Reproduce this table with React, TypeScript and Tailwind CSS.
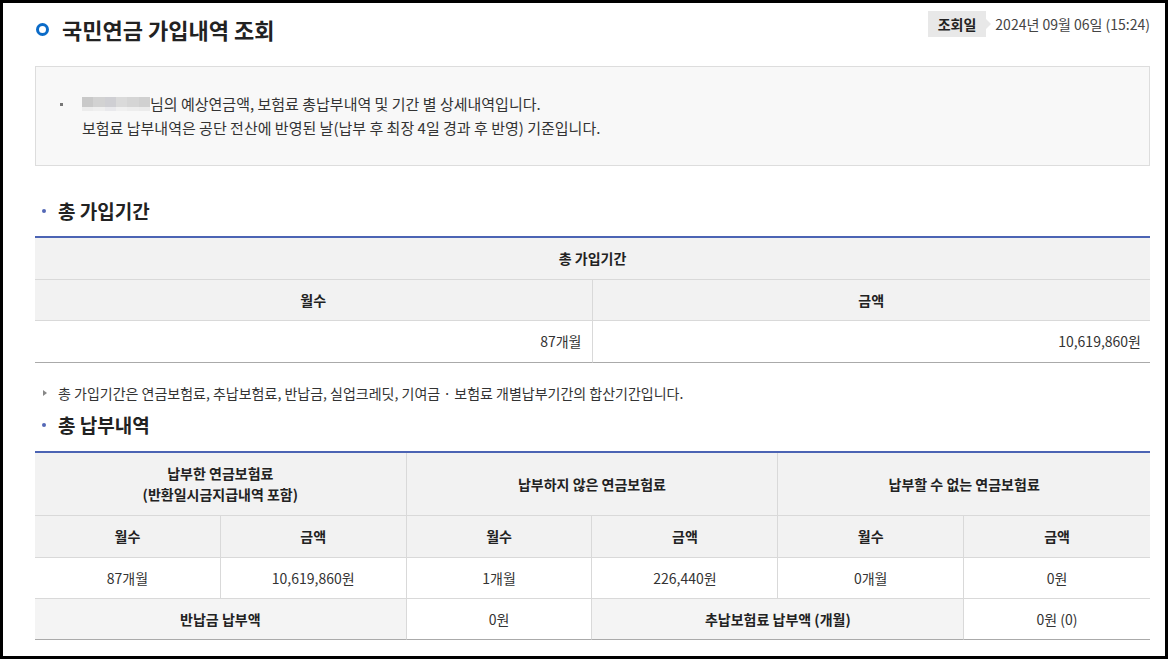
import React from "react";

const th = "flex items-center justify-center bg-[#f2f2f2] font-bold text-[14px] text-[#222] border-b border-[#d9d9d9]";
const td = "flex items-center justify-center text-[14px] text-[#333] border-b border-[#d9d9d9]";

function Heading({ children }: { children: React.ReactNode }) {
  return (
    <div className="flex items-center h-[26px]">
      <span className="ml-[7px] w-[4px] h-[4px] rounded-full bg-[#5468b6]" />
      <span className="ml-[12px] text-[19px] font-bold text-[#222] leading-[26px]">{children}</span>
    </div>
  );
}

function Blur() {
  const top = ["#c9c9c9", "#d2d2d2", "#cfcfd3", "#dadada", "#d5d5d5", "#d0d0d0"];
  const bot = ["#ececec", "#efefef", "#e9e9ec", "#f0f0f0", "#ededed", "#ebebeb"];
  return (
    <span className="inline-flex flex-col w-[68px] h-[14px] align-middle">
      <span className="flex h-[10px]">
        {top.map((c, i) => (
          <span key={i} className="flex-1" style={{ background: c }} />
        ))}
      </span>
      <span className="flex h-[4px]">
        {bot.map((c, i) => (
          <span key={i} className="flex-1" style={{ background: c }} />
        ))}
      </span>
    </span>
  );
}

export default function App() {
  return (
    <div className="w-[1168px] h-[659px] bg-black p-[3px] font-['Noto_Sans_CJK_KR','Noto_Sans',sans-serif]">
      <div className="w-full h-full bg-white pl-[32px] pr-[15px] overflow-hidden">
        {/* header */}
        <div className="flex justify-between items-start pt-[8px]">
          <div className="flex items-center mt-[3px] h-[30px]">
            <span className="ml-[1px] w-[13px] h-[13px] rounded-full border-[3px] border-[#0b6bc8]" />
            <span className="ml-[13px] text-[22px] font-bold text-[#222] leading-[30px]">국민연금 가입내역 조회</span>
          </div>
          <div className="flex items-center h-[26px]">
            <span className="h-[26px] px-[10px] flex items-center bg-[#e8e8e8] text-[14px] font-bold text-[#222]">조회일</span>
            <span className="w-0 h-0 border-y-[5px] border-y-transparent border-l-[5px] border-l-[#e8e8e8]" />
            <span className="ml-[4px] text-[14px] text-[#444]">2024년 09월 06일 (15:24)</span>
          </div>
        </div>

        {/* info box */}
        <div className="mt-[22px] border border-[#dddddd] bg-[#f8f8f8] pt-[25px] pb-[25px] pl-[24px]">
          <div className="flex items-start text-[15px] text-[#333] leading-[24px]">
            <span className="mt-[11px] w-[3px] h-[3px] bg-[#777]" />
            <div className="ml-[19px]">
              <div className="flex items-center">
                <Blur />
                <span>님의 예상연금액, 보험료 총납부내역 및 기간 별 상세내역입니다.</span>
              </div>
              <div>보험료 납부내역은 공단 전산에 반영된 날(납부 후 최장 4일 경과 후 반영) 기준입니다.</div>
            </div>
          </div>
        </div>

        {/* section 1 */}
        <div className="mt-[32px]">
          <Heading>총 가입기간</Heading>
        </div>
        <div className="mt-[12px] border-t-2 border-[#4c64b4]">
          <div className="grid grid-cols-2">
            <div className={`${th} col-span-2 h-[42px]`}>총 가입기간</div>
            <div className={`${th} h-[41px] border-r`}>월수</div>
            <div className={`${th} h-[41px]`}>금액</div>
            <div className={`${td} h-[42px] justify-end pr-[10px] border-r border-b-[#aaaaaa]`}>87개월</div>
            <div className={`${td} h-[42px] justify-end pr-[9px] border-b-[#aaaaaa]`}>10,619,860원</div>
          </div>
        </div>

        <div className="mt-[20px] flex items-center h-[20px] text-[14px] text-[#333]">
          <span className="ml-[8px] w-0 h-0 border-y-[3px] border-y-transparent border-l-[4px] border-l-[#888]" />
          <span className="ml-[11px]">총 가입기간은 연금보험료, 추납보험료, 반납금, 실업크레딧, 기여금 · 보험료 개별납부기간의 합산기간입니다.</span>
        </div>

        {/* section 2 */}
        <div className="mt-[9px]">
          <Heading>총 납부내역</Heading>
        </div>
        <div className="mt-[13px] border-t-2 border-[#4c64b4]">
          <div className="grid grid-cols-6">
            <div className={`${th} col-span-2 h-[63px] border-r flex-col leading-[21px]`}>
              <span>납부한 연금보험료</span>
              <span>(반환일시금지급내역 포함)</span>
            </div>
            <div className={`${th} col-span-2 h-[63px] border-r`}>납부하지 않은 연금보험료</div>
            <div className={`${th} col-span-2 h-[63px]`}>납부할 수 없는 연금보험료</div>

            <div className={`${th} h-[42px] border-r`}>월수</div>
            <div className={`${th} h-[42px] border-r`}>금액</div>
            <div className={`${th} h-[42px] border-r`}>월수</div>
            <div className={`${th} h-[42px] border-r`}>금액</div>
            <div className={`${th} h-[42px] border-r`}>월수</div>
            <div className={`${th} h-[42px]`}>금액</div>

            <div className={`${td} h-[41px] border-r`}>87개월</div>
            <div className={`${td} h-[41px] border-r`}>10,619,860원</div>
            <div className={`${td} h-[41px] border-r`}>1개월</div>
            <div className={`${td} h-[41px] border-r`}>226,440원</div>
            <div className={`${td} h-[41px] border-r`}>0개월</div>
            <div className={`${td} h-[41px]`}>0원</div>

            <div className={`${th} col-span-2 h-[41px] border-r bg-[#f4f4f4] border-b-[#aaaaaa]`}>반납금 납부액</div>
            <div className={`${td} h-[41px] border-r border-b-[#aaaaaa]`}>0원</div>
            <div className={`${th} col-span-2 h-[41px] border-r bg-[#f4f4f4] border-b-[#aaaaaa]`}>추납보험료 납부액 (개월)</div>
            <div className={`${td} h-[41px] border-b-[#aaaaaa]`}>0원 (0)</div>
          </div>
        </div>
      </div>
    </div>
  );
}
